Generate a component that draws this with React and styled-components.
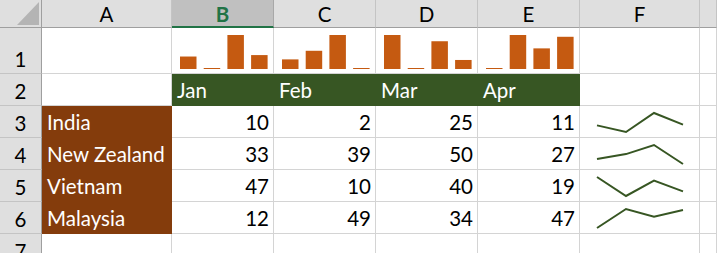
import React from 'react';
import styled, { createGlobalStyle } from 'styled-components';

const GlobalStyle = createGlobalStyle`
  html, body {
    margin: 0;
    padding: 0;
    background: #ffffff;
    overflow: hidden;
  }
  * {
    box-sizing: border-box;
  }
`;

const ORANGE = '#c55a11';
const GREEN = '#375623';
const BROWN = '#843c0c';

const rows = [
  { name: 'India', vals: [10, 2, 25, 11] },
  { name: 'New Zealand', vals: [33, 39, 50, 27] },
  { name: 'Vietnam', vals: [47, 10, 40, 19] },
  { name: 'Malaysia', vals: [12, 49, 34, 47] },
];

const months = ['Jan', 'Feb', 'Mar', 'Apr'];

const Sheet = styled.div`
  display: grid;
  grid-template-columns: 42px 130px 102px 102px 102px 102px 120px 1fr;
  grid-template-rows: 28px 46px repeat(6, 32px);
  width: 717px;
  height: 253px;
  overflow: hidden;
  font-family: Lato, 'Liberation Sans', sans-serif;
  font-size: 20.5px;
  color: #000000;
`;

const Corner = styled.div`
  position: relative;
  background: #dfdfdf;
  border-right: 1px solid #9f9f9f;
  border-bottom: 1px solid #9f9f9f;

  &::after {
    content: '';
    position: absolute;
    left: 17px;
    top: 2px;
    width: 22px;
    height: 23px;
    background: #b4b4b4;
    clip-path: polygon(100% 0, 100% 100%, 0 100%);
  }
`;

const ColHead = styled.div`
  display: flex;
  align-items: center;
  justify-content: center;
  background: ${(p) => (p.$selected ? '#c0c0c0' : '#dfdfdf')};
  border-right: 1px solid ${(p) => (p.$selected ? '#a8a8a8' : '#c4c4c4')};
  border-bottom: ${(p) => (p.$selected ? `2px solid #217346` : '1px solid #9f9f9f')};
  color: ${(p) => (p.$selected ? '#217346' : '#000000')};
  font-weight: ${(p) => (p.$selected ? 700 : 400)};
  padding-top: ${(p) => (p.$selected ? '2px' : '1px')};
`;

const RowHead = styled.div`
  display: flex;
  align-items: flex-end;
  justify-content: center;
  padding-bottom: 4px;
  background: #dfdfdf;
  border-right: 1px solid #9f9f9f;
  border-bottom: 1px solid #c4c4c4;
  line-height: 1;
`;

const Cell = styled.div`
  display: flex;
  align-items: flex-end;
  justify-content: ${(p) => (p.$right ? 'flex-end' : 'flex-start')};
  padding: 0 ${(p) => (p.$right ? '4px' : '0')} 5px ${(p) => (p.$right ? '0' : '5px')};
  background: ${(p) => p.$fill || '#ffffff'};
  color: ${(p) => (p.$fill ? '#ffffff' : '#000000')};
  border-right: 1px solid ${(p) => p.$fill || '#d4d4d4'};
  border-bottom: 1px solid ${(p) => p.$fill || '#d4d4d4'};
  line-height: 1;
  white-space: nowrap;
  overflow: hidden;
`;

const ChartCell = styled.div`
  background: #ffffff;
  border-right: 1px solid #d4d4d4;
  border-bottom: 1px solid #d4d4d4;

  svg {
    display: block;
  }
`;

function BarSpark({ vals }) {
  const min = Math.min(...vals);
  const max = Math.max(...vals);
  return (
    <ChartCell>
      <svg width="101" height="45">
        {vals.map((v, i) => {
          const h = 1 + ((v - min) / (max - min)) * 33;
          return (
            <rect key={i} x={8 + i * 23.7} y={41 - h} width="16.5" height={h} fill={ORANGE} />
          );
        })}
      </svg>
    </ChartCell>
  );
}

function LineSpark({ vals }) {
  const min = Math.min(...vals);
  const max = Math.max(...vals);
  const xs = [17, 46, 74, 103];
  const pts = vals
    .map((v, i) => `${xs[i]},${7 + ((max - v) / (max - min)) * 19}`)
    .join(' ');
  return (
    <ChartCell>
      <svg width="119" height="31">
        <polyline points={pts} fill="none" stroke={GREEN} strokeWidth="2" strokeLinejoin="miter" />
      </svg>
    </ChartCell>
  );
}

export default function App() {
  const cols = ['A', 'B', 'C', 'D', 'E', 'F', ''];
  return (
    <>
      <GlobalStyle />
      <Sheet>
        <Corner />
        {cols.map((c) => (
          <ColHead key={c || 'g'} $selected={c === 'B'}>
            {c}
          </ColHead>
        ))}

        <RowHead>1</RowHead>
        <Cell />
        {rows.map((r) => (
          <BarSpark key={r.name} vals={r.vals} />
        ))}
        <Cell />
        <Cell />

        <RowHead>2</RowHead>
        <Cell />
        {months.map((m) => (
          <Cell key={m} $fill={GREEN}>
            {m}
          </Cell>
        ))}
        <Cell />
        <Cell />

        {rows.map((r, idx) => (
          <React.Fragment key={r.name}>
            <RowHead>{idx + 3}</RowHead>
            <Cell $fill={BROWN}>{r.name}</Cell>
            {r.vals.map((v, i) => (
              <Cell key={i} $right>
                {v}
              </Cell>
            ))}
            <LineSpark vals={r.vals} />
            <Cell />
          </React.Fragment>
        ))}

        <RowHead>7</RowHead>
        {cols.map((c) => (
          <Cell key={c || 'g'} />
        ))}
      </Sheet>
    </>
  );
}
